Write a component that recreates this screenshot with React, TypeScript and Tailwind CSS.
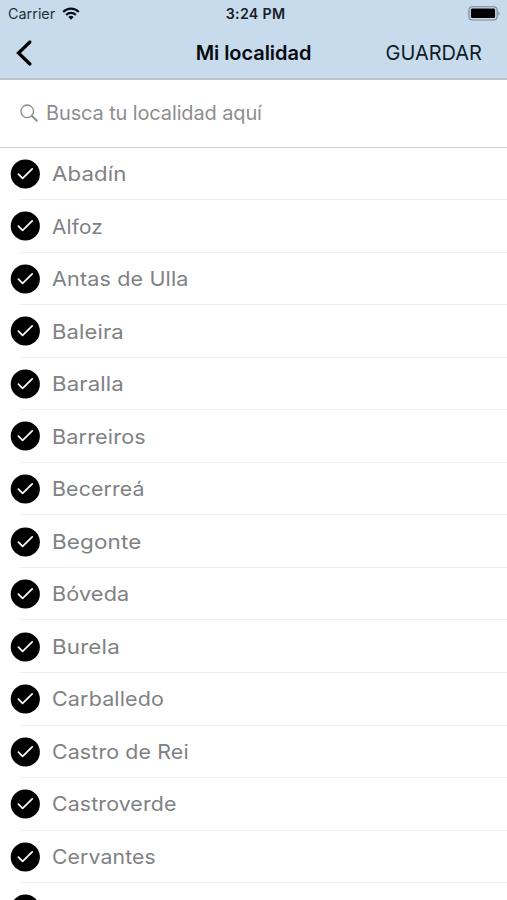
const towns = [
  { name: 'Abadín', stretch: 'scale-x-[1.11]' },
  { name: 'Alfoz', stretch: 'scale-x-[1.04]' },
  { name: 'Antas de Ulla', stretch: 'scale-x-[1.077]' },
  { name: 'Baleira', stretch: 'scale-x-[1.098]' },
  { name: 'Baralla', stretch: 'scale-x-[1.107]' },
  { name: 'Barreiros', stretch: 'scale-x-[1.08]' },
  { name: 'Becerreá', stretch: 'scale-x-[1.064]' },
  { name: 'Begonte', stretch: 'scale-x-[1.122]' },
  { name: 'Bóveda', stretch: 'scale-x-[1.081]' },
  { name: 'Burela', stretch: 'scale-x-[1.118]' },
  { name: 'Carballedo', stretch: 'scale-x-[1.074]' },
  { name: 'Castro de Rei', stretch: 'scale-x-[1.067]' },
  { name: 'Castroverde', stretch: 'scale-x-[1.065]' },
  { name: 'Cervantes', stretch: 'scale-x-[1.058]' },
  { name: '', stretch: 'scale-x-100' },
];

function WifiIcon() {
  return (
    <svg className="ml-[7px] h-[13px] w-[18px]" viewBox="0 0 18 13" fill="none" stroke="#0b0f14" strokeWidth="2.1">
      <path d="M1.2 4.9a11 11 0 0 1 15.6 0" />
      <path d="M4.1 7.9a6.9 6.9 0 0 1 9.8 0" />
      <path d="M9 12.8L6.3 10.1a3.8 3.8 0 0 1 5.4 0Z" fill="#0b0f14" stroke="none" />
    </svg>
  );
}

function BatteryIcon() {
  return (
    <svg className="h-[15px] w-[32px]" viewBox="0 0 32 15" fill="none">
      <rect x="0.9" y="0.7" width="28.2" height="13.3" rx="3.4" stroke="#79848e" strokeWidth="1.1" />
      <rect x="2.9" y="2.6" width="24.2" height="9.5" rx="1.4" fill="#000" />
      <path d="M30.3 5.2c1.6.7 1.6 3.6 0 4.3Z" fill="#79848e" />
    </svg>
  );
}

function CheckBadge() {
  return (
    <svg className="h-[30px] w-[30px] shrink-0" viewBox="0 0 30 30" fill="none">
      <circle cx="15.3" cy="15" r="14.6" fill="#000" />
      <path d="M8.4 15.2L12.6 19.4L22.2 9.8" stroke="#fff" strokeWidth="1.7" strokeLinecap="round" strokeLinejoin="round" />
    </svg>
  );
}

export default function App() {
  return (
    <div className="flex h-[900px] w-[507px] flex-col overflow-hidden bg-white font-['Inter','Liberation_Sans',sans-serif]">
      <header className="h-[80px] shrink-0 border-b-2 border-[#b9c3cc] bg-[#c7dbec]">
        <div className="grid h-[27px] grid-cols-3 items-center pl-[8px] pr-[7px]">
          <div className="flex items-center text-[14.4px] text-[#26313b]">
            <span className="whitespace-nowrap">Carrier</span>
            <WifiIcon />
          </div>
          <span className="pl-[3px] text-center text-[14.2px] font-semibold tracking-[0.3px] text-[#17202a]">3:24 PM</span>
          <div className="flex justify-end"><BatteryIcon /></div>
        </div>
        <div className="grid h-[51px] grid-cols-3 items-center pl-[15px] pr-[25px]">
          <svg className="h-[28px] w-[17px]" viewBox="0 0 17 28" fill="none" stroke="#000" strokeWidth="3.2" strokeLinecap="round">
            <path d="M14.9 3L3.5 14L14.9 25" />
          </svg>
          <h1 className="whitespace-nowrap pl-[10px] text-center text-[20px] font-semibold tracking-[-0.06px] text-[#060a10]">Mi localidad</h1>
          <span className="text-right text-[20px] text-[#101b26]">GUARDAR</span>
        </div>
      </header>
      <div className="flex h-[68px] shrink-0 items-center border-b border-[#cfcfcf] pb-[2px] pl-[20px]">
        <svg className="mt-px h-[19px] w-[19px]" viewBox="0 0 19 19" fill="none" stroke="#8e8e8e" strokeLinecap="round">
          <circle cx="7.2" cy="7.3" r="6.3" strokeWidth="1.3" />
          <path d="M12 12L16.8 16.8" strokeWidth="2" />
        </svg>
        <span className="ml-[7px] whitespace-nowrap text-[20px] tracking-[-0.13px] text-[#8e8e8e]">Busca tu localidad aquí</span>
      </div>
      <ul className="min-h-0 flex-1 overflow-hidden text-[#808183]">
        {towns.map((town, i) => (
          <li key={i} className={i === 0 ? 'flex h-[52.2px] flex-col' : 'flex h-[52.54px] flex-col'}>
            <div className="flex flex-1 items-center pl-[10px] pt-[0.8px]">
              <CheckBadge />
              <span className={`ml-[12.3px] origin-left whitespace-nowrap pt-[0.6px] text-[20px] font-normal tracking-[0.14px] ${town.stretch}`}>{town.name}</span>
            </div>
            <div className="ml-[20px] h-px shrink-0 bg-[#efefef]" />
          </li>
        ))}
      </ul>
    </div>
  );
}
